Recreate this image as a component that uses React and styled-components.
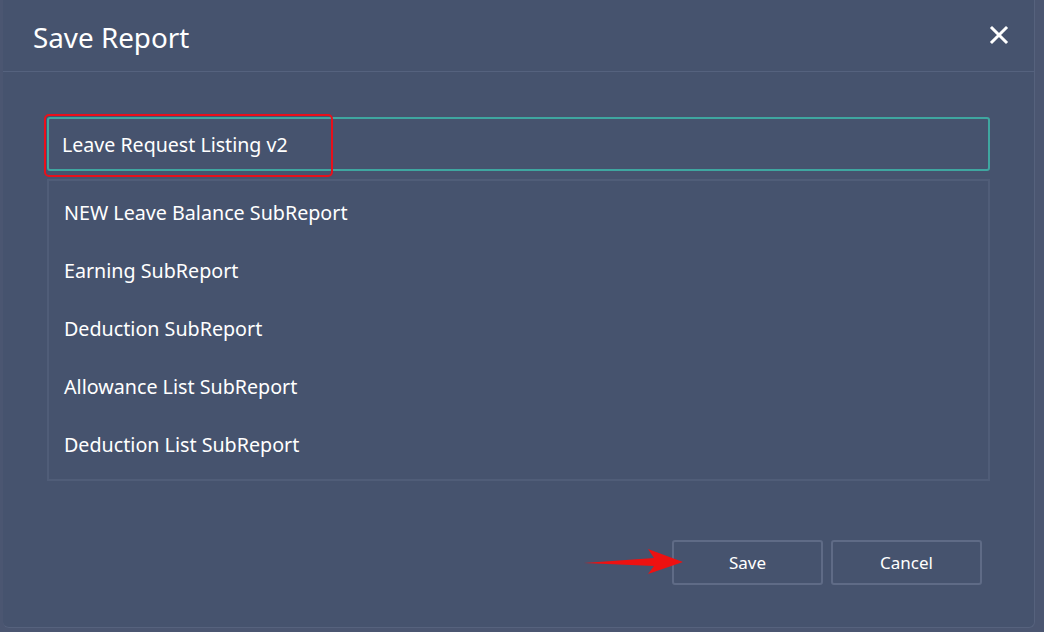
import React from "react";
import styled, { createGlobalStyle } from "styled-components";

const GlobalStyle = createGlobalStyle`
  html, body {
    margin: 0;
    padding: 0;
    background: #4a5570;
    font-family: "Noto Sans", "Open Sans", sans-serif;
  }
`;

const Page = styled.div`
  width: 1044px;
  height: 632px;
  overflow: hidden;
  position: relative;
  background: #4b5671;
`;

const Dialog = styled.div`
  position: relative;
  margin-left: 3px;
  width: 1031px;
  height: 627px;
  background: #46536e;
  border-right: 1px solid #56627d;
  border-bottom: 1px solid #56627d;
  border-radius: 0 0 6px 6px;
  display: flex;
  flex-direction: column;
`;

const Header = styled.div`
  height: 72px;
  border-bottom: 1px solid #55627e;
  display: flex;
  align-items: center;
  justify-content: space-between;
  padding: 2px 23px 0 30px;
  box-sizing: border-box;
`;

const Title = styled.h2`
  margin: 0;
  font-weight: 400;
  font-size: 27.8px;
  color: #ffffff;
`;

const Close = styled.button`
  background: none;
  border: none;
  padding: 0;
  margin-top: -3px;
  width: 24px;
  height: 24px;
  display: flex;
  align-items: center;
  justify-content: center;
  color: #fff;
  cursor: pointer;
`;

const Body = styled.div`
  padding: 45px 44px 0 44px;
  display: flex;
  flex-direction: column;
  gap: 8px;
`;

const InputWrap = styled.div`
  position: relative;
`;

const NameInput = styled.input`
  box-sizing: border-box;
  width: 100%;
  height: 54px;
  background: transparent;
  border: 2px solid #3fa6a0;
  border-radius: 3px;
  padding: 0 13px;
  font-family: inherit;
  font-size: 19.6px;
  color: #fff;
  outline: none;
`;

const Highlight = styled.div`
  position: absolute;
  left: -3px;
  top: -3px;
  width: 289px;
  height: 63px;
  border: 2px solid #e8101a;
  border-radius: 5px;
  box-sizing: border-box;
  pointer-events: none;
`;

const List = styled.ul`
  list-style: none;
  margin: 0;
  padding: 2px 0 10px;
  border: 2px solid #505d78;
  box-sizing: border-box;
  height: 302px;
`;

const Item = styled.li`
  height: 58.2px;
  display: flex;
  align-items: center;
  padding-left: 15px;
  font-size: 19.7px;
  color: #fff;
`;

const Footer = styled.div`
  margin-top: auto;
  padding: 0 52px 42px 0;
  display: flex;
  justify-content: flex-end;
  gap: 8px;
  position: relative;
`;

const Button = styled.button`
  width: 151px;
  height: 45px;
  background: transparent;
  border: 2px solid #5f6b86;
  border-radius: 3px;
  font-family: inherit;
  font-size: 17px;
  color: #fff;
  cursor: pointer;
`;

const Arrow = styled.svg`
  position: absolute;
  left: 579px;
  top: 7px;
`;

const reports = [
  "NEW Leave Balance SubReport",
  "Earning SubReport",
  "Deduction SubReport",
  "Allowance List SubReport",
  "Deduction List SubReport",
];

export default function App() {
  return (
    <Page>
      <GlobalStyle />
      <Dialog>
        <Header>
          <Title>Save Report</Title>
          <Close aria-label="Close">
            <svg width="20" height="20" viewBox="0 0 20 20">
              <path d="M3 3 L17 17 M17 3 L3 17" stroke="#fff" strokeWidth="3" strokeLinecap="square" />
            </svg>
          </Close>
        </Header>
        <Body>
          <InputWrap>
            <NameInput defaultValue="Leave Request Listing v2" />
            <Highlight />
          </InputWrap>
          <List>
            {reports.map((r) => (
              <Item key={r}>{r}</Item>
            ))}
          </List>
        </Body>
        <Footer>
          <Arrow width="104" height="30" viewBox="0 0 104 30">
            <path d="M2 16 L72 11 L66 2 L101 15 L66 27 L72 19 Z" fill="#ee1111" />
          </Arrow>
          <Button>Save</Button>
          <Button>Cancel</Button>
        </Footer>
      </Dialog>
    </Page>
  );
}
